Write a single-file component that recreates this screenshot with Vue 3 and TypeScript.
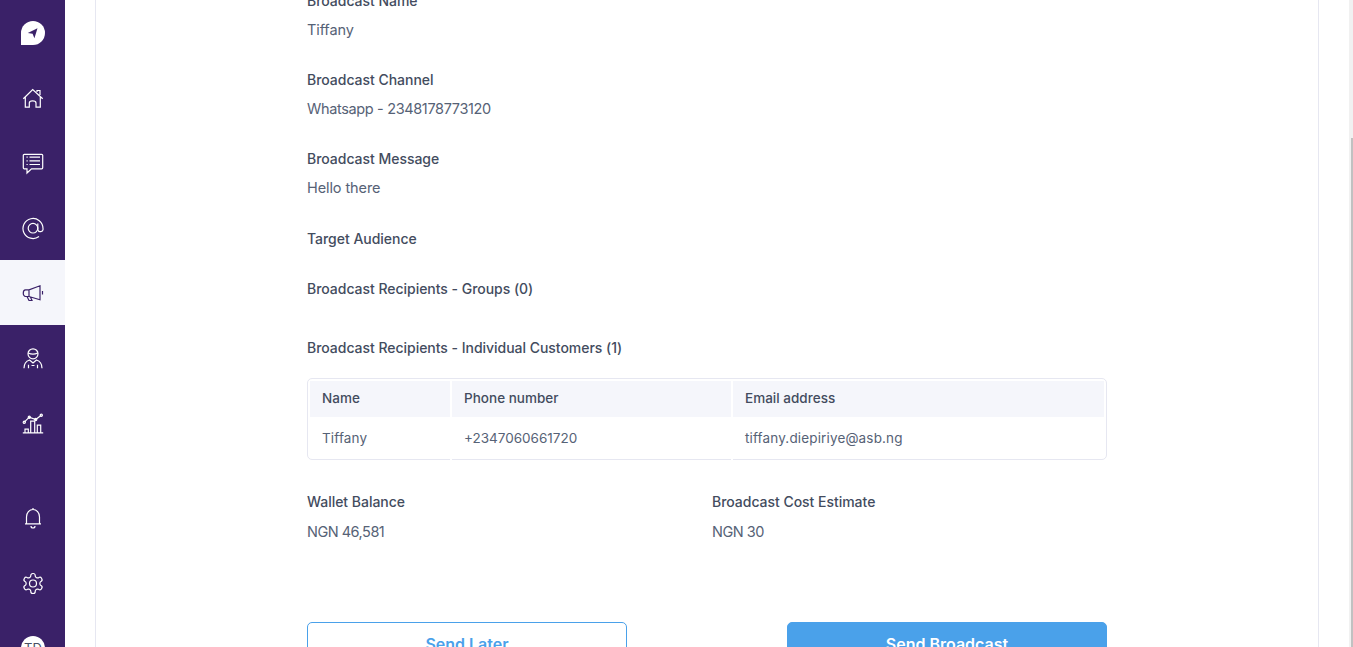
<script setup lang="ts">
const fields = [
  { label: 'Broadcast Name', value: 'Tiffany', num: false },
  { label: 'Broadcast Channel', value: 'Whatsapp - 2348178773120', num: true },
  { label: 'Broadcast Message', value: 'Hello there', num: false },
]
</script>

<template>
  <div class="page">
    <aside class="rail">
      <div class="logo">
        <svg width="24" height="24" viewBox="0 0 24 24"><path d="M12 0a12 12 0 1 1 0 24H0V12A12 12 0 0 1 12 0Z" fill="#fff"/><path d="M16.500 7.300 6.800 12l4.800.8 1.800 4.500Z" fill="#3a2168"/></svg>
      </div>
      <nav class="nav">
        <a class="item"><svg class="ico" viewBox="0 0 24 24"><path d="M2.300 12.800 11.700 3.500l10 9.300M4.300 11v10.200h4V17a3.300 2 0 0 1 6.700 0v4.200h4.300V11M16 6V4.500h3v4.500"/></svg></a>
        <a class="item"><svg class="ico" viewBox="0 0 24 24"><path d="M3.300 3.300h17.400a1 1 0 0 1 1 1v12.500a1 1 0 0 1-1 1H10.500L6 22V17.800H3.300a1 1 0 0 1-1-1V4.300a1 1 0 0 1 1-1ZM8.500 6.200H19M8.500 9.800H19M8.500 13.500H19M5.500 6.200h1.200M5.500 9.800h1.200M5.500 13.500h1.200"/></svg></a>
        <a class="item"><svg class="ico" viewBox="0 0 24 24"><circle cx="12" cy="12.200" r="4.800"/><path d="M16.800 7.500v6a2.600 2.600 0 0 0 5.200-1A10 10 0 1 0 18 20.500"/></svg></a>
        <a class="item active"><svg class="ico" viewBox="0 0 24 24"><path d="M19 4.800v14L8 15.500H4.500a2.200 3.300 0 0 1 0-6.700H8ZM8 8.800v6.700M6 15.500l2 4h3l-1.500-3.300M21.500 10v3.500"/></svg></a>
        <a class="item"><svg class="ico" viewBox="0 0 24 24"><circle cx="12" cy="7.800" r="5"/><path d="M7.200 7c3 1.500 6.500 1.500 9.600 0M3 22.300c0-4.500 1.500-7 5.500-8.300l3.500 3 3.500-3c4 1.300 5.500 3.800 5.500 8.300M7.500 22.300v-3.500M16.500 22.300v-3.500M10.500 19.500h3"/></svg></a>
        <a class="item"><svg class="ico" viewBox="0 0 24 24"><path d="M1.800 21.800h20.400M4 21.800v-3.600h3.300v3.600M9.700 21.800V10.200h4v11.600M16.300 21.800v-7.600h3.400v7.600M3.300 11.200l5-5 6.400 2.300 5.600-4.300"/><circle cx="3.300" cy="11.200" r="1.100"/><circle cx="8.300" cy="6.200" r="1.100"/><circle cx="14.700" cy="8.500" r="1.100"/><circle cx="20.300" cy="4.200" r="1.100"/></svg></a>
      </nav>
      <div class="rail-bottom">
        <a class="item"><svg class="ico" viewBox="0 0 24 24"><path d="M5.500 17.800V11a6.500 7.500 0 0 1 13 0v6.800M4 17.800h16M12 2v1.500M10 20a2 2 0 0 0 4 0"/></svg></a>
        <a class="item"><svg class="ico" viewBox="0 0 24 24"><g transform="translate(0 .5)"><path d="M12.220 2h-.44a2 2 0 0 0-2 2v.18a2 2 0 0 1-1 1.730l-.43.250a2 2 0 0 1-2 0l-.15-.080a2 2 0 0 0-2.730.730l-.22.380a2 2 0 0 0 .730 2.730l.150.100a2 2 0 0 1 1 1.720v.510a2 2 0 0 1-1 1.740l-.150.090a2 2 0 0 0-.730 2.730l.220.380a2 2 0 0 0 2.730.730l.150-.080a2 2 0 0 1 2 0l.430.250a2 2 0 0 1 1 1.730V20a2 2 0 0 0 2 2h.440a2 2 0 0 0 2-2v-.180a2 2 0 0 1 1-1.730l.430-.250a2 2 0 0 1 2 0l.150.080a2 2 0 0 0 2.730-.730l.220-.390a2 2 0 0 0-.730-2.730l-.150-.080a2 2 0 0 1-1-1.740v-.500a2 2 0 0 1 1-1.740l.150-.090a2 2 0 0 0 .730-2.730l-.220-.380a2 2 0 0 0-2.730-.730l-.150.080a2 2 0 0 1-2 0l-.430-.250a2 2 0 0 1-1-1.730V4a2 2 0 0 0-2-2Z"/><circle cx="12" cy="12" r="3.500"/></g></svg></a>
        <div class="avatar">TD</div>
      </div>
    </aside>

    <div class="gutter"></div>

    <main class="panel">
      <section class="form">
        <div v-for="f in fields" :key="f.label" class="field">
          <div class="label">{{ f.label }}</div>
          <div class="value" :class="{ num: f.num }">{{ f.value }}</div>
        </div>
        <div class="label solo audience">Target Audience</div>
        <div class="label solo groups">Broadcast Recipients - Groups (0)</div>
        <div class="label solo individuals">Broadcast Recipients - Individual Customers (1)</div>

        <div class="table">
          <div class="cell head">Name</div>
          <div class="cell head">Phone number</div>
          <div class="cell head">Email address</div>
          <div class="cell body tick">Tiffany</div>
          <div class="cell body tick phone">+2347060661720</div>
          <div class="cell body">tiffany.diepiriye@asb.ng</div>
        </div>

        <div class="costs">
          <div>
            <div class="label">Wallet Balance</div>
            <div class="value cost num">NGN 46,581</div>
          </div>
          <div>
            <div class="label">Broadcast Cost Estimate</div>
            <div class="value cost num">NGN 30</div>
          </div>
        </div>

        <div class="actions">
          <button class="btn outline" type="button">Send Later</button>
          <button class="btn solid" type="button">Send Broadcast</button>
        </div>
      </section>
    </main>

    <div class="scrollbar"><div class="thumb"></div></div>
  </div>
</template>

<style>
html, body { margin: 0; height: 100%; overflow: hidden; background: #fff; }
</style>

<style scoped>
.page {
  position: relative;
  display: flex;
  height: 647px;
  overflow: hidden;
  background: #fff;
  font-family: Inter, "Noto Sans", sans-serif;
  color: #434c5e;
}
.rail {
  flex: 0 0 65px;
  height: 647px;
  background: #3a2168;
  display: flex;
  flex-direction: column;
  overflow: hidden;
}
.logo { flex: none; height: 65px; box-sizing: border-box; padding-left: 1px; display: flex; align-items: center; justify-content: center; }
.nav { flex: none; }
.item { height: 65px; box-sizing: border-box; padding-left: 1px; display: flex; align-items: center; justify-content: center; flex: none; }
.item.active { background: #f5f6fb; }
.ico { width: 24px; height: 24px; fill: none; stroke: #fff; stroke-width: 1.200; }
.active .ico { stroke: #3a2168; }
.rail-bottom { flex: none; margin-top: 30px; display: flex; flex-direction: column; align-items: center; }
.rail-bottom .item { align-self: stretch; }
.avatar {
  flex: none;
  width: 24px;
  height: 24px;
  margin-top: 21px;
  margin-left: 1px;
  border-radius: 50%;
  background: #fff;
  color: #4a4f62;
  font-size: 13px;
  line-height: 24px;
  text-align: center;
}
.gutter { flex: 0 0 30px; }
.panel {
  flex: 0 0 1224px;
  border-left: 1px solid #e6e7f1;
  border-right: 1px solid #e6e7f1;
  box-sizing: border-box;
  height: 647px;
  overflow: hidden;
}
.form { width: 800px; margin: -9px 0 0 211px; }
.field { margin-bottom: 30px; }
.label { font-size: 14px; line-height: 19px; font-weight: 500; color: #434c5e; letter-spacing: -0.03px; }
.value { font-size: 14.500px; line-height: 20px; margin-top: 10px; color: #566276; letter-spacing: -0.1px; }
.value.num { letter-spacing: -0.35px; }
.value.cost { margin-top: 11px; letter-spacing: -0.5px; }
.solo { margin-bottom: 31px; }
.audience { margin-top: 31px; }
.groups { margin-bottom: 40px; }
.individuals { margin-bottom: 21px; }
.table {
  display: grid;
  grid-template-columns: 140px 279px 1fr;
  column-gap: 2px;
  box-sizing: border-box;
  height: 82px;
  padding: 2px;
  border: 1px solid #e6e7f1;
  border-radius: 5px;
}
.cell {
  position: relative;
  padding-left: 12px;
  font-size: 13.500px;
  color: #566276;
}
.head {
  height: 36px;
  line-height: 35px;
  background: #f5f6fb;
  font-weight: 500;
  letter-spacing: 0.02px;
  color: #434c5e;
}
.body { height: 40px; line-height: 42px; letter-spacing: 0.15px; }
.phone { letter-spacing: 0; }
.tick::after {
  content: "";
  position: absolute;
  right: -2px;
  bottom: -3px;
  width: 2px;
  height: 1px;
  background: #fff;
}
.costs { display: grid; grid-template-columns: 405px 1fr; margin-top: 32px; }
.actions { display: flex; justify-content: space-between; margin-top: 80px; }
.btn {
  width: 320px;
  height: 44px;
  flex: none;
  border-radius: 5px 5px 0 0;
  font: 600 16px Inter, "Noto Sans", sans-serif;
  padding: 0;
}
.outline { background: #fff; border: 1px solid #4aa1ea; color: #4aa1ea; }
.solid { background: #4aa1ea; border: 1px solid #4aa1ea; color: #fff; }
.scrollbar {
  position: absolute;
  top: 0;
  right: 0;
  width: 4px;
  height: 647px;
  background: #f1f1f1;
}
.thumb { position: absolute; top: 138px; right: 0; width: 2px; bottom: 0; background: #c1c1c1; }
</style>
